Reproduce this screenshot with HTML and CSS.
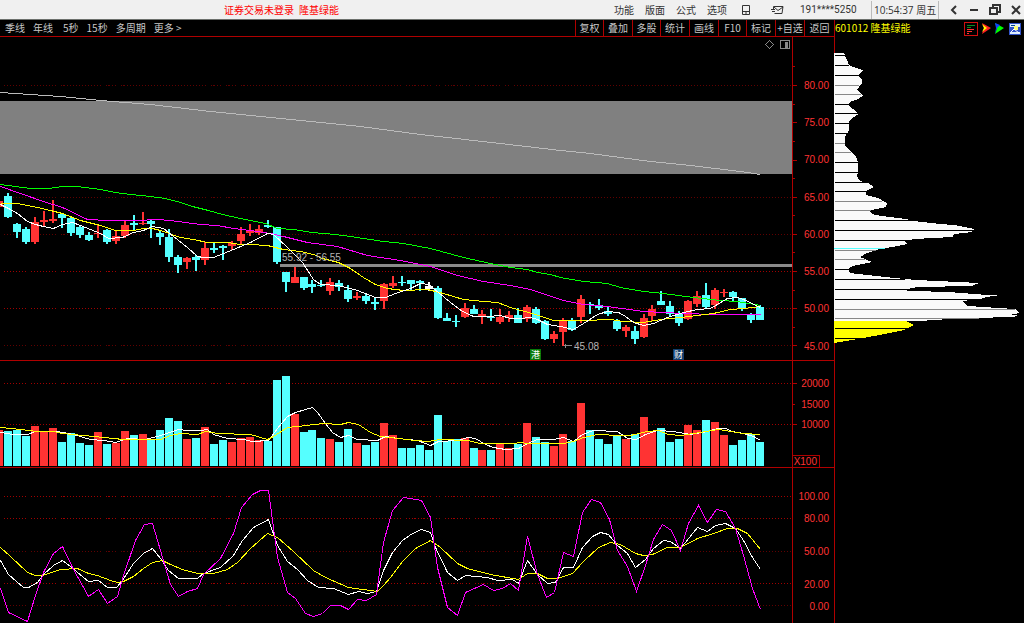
FILE: index.html
```html
<!DOCTYPE html>
<html lang="zh-CN">
<head>
<meta charset="utf-8">
<title>隆基绿能 601012</title>
<link rel="stylesheet" href="styles.css">
</head>
<body>
<div class="app">
<header class="titlebar">
  <h1 class="title">证券交易未登录&ensp;隆基绿能</h1>
  <nav class="menu">
    <button>功能</button><button>版面</button><button>公式</button><button>选项</button>
  </nav>
  <div class="tools">
    <button aria-label="手机"><svg width="10" height="12" viewBox="0 0 10 12"><path d="M1.5 1.5H8.5V10.5H1.5ZM1.5 7.5H8.5M4 9H6" class="ink"/></svg></button>
    <button aria-label="邮件"><svg width="14" height="12" viewBox="0 0 14 12"><path d="M2.5 5V2.5H12L11 9.5H3.5M3 3L7 6.5L12 3M0 5.5H4M1 7.5H4" class="ink"/></svg></button>
  </div>
  <span class="account">191****5250</span>
  <time class="clock">10:54:37 周五</time>
  <div class="window-buttons">
    <button aria-label="后退"><svg width="10" height="12" viewBox="0 0 10 12"><path d="M7 2L3 6L7 10" class="bold"/></svg></button>
    <button aria-label="最小化"><svg width="10" height="12" viewBox="0 0 10 12"><path d="M1 6H9" class="bold"/></svg></button>
    <button aria-label="还原"><svg width="12" height="12" viewBox="0 0 12 12"><path d="M1 4H8V10H1ZM4 4V1H11V8H8" class="bold"/></svg></button>
    <button aria-label="关闭"><svg width="10" height="12" viewBox="0 0 10 12"><path d="M1 2L9 10M9 2L1 10" class="bold"/></svg></button>
  </div>
</header>
<main class="workspace">
<section class="charts">
  <div class="toolbar">
    <nav class="periods">
      <button>季线</button><button>年线</button><button>5秒</button><button>15秒</button><button>多周期</button><button>更多 &gt;</button>
    </nav>
    <nav class="actions">
      <button>复权</button><button>叠加</button><button>多股</button><button>统计</button><button>画线</button><button>F10</button><button>标记</button><button>+自选</button><button>返回</button>
    </nav>
  </div>
  <div class="panels">
    <div class="panel">
      <svg class="plot" viewBox="0 37 792 323" preserveAspectRatio="none" role="img" aria-label="K线图">
        <rect x="0" y="101" width="792" height="73" fill="#808080"/>
        <g class="lines"><path class="grid" d="M3 85H792M3 197H792M3 234H792M3 345H792"/><path class="grid bright" d="M3 271H792M3 308H792"/></g>
        <rect x="280" y="264" width="512" height="3" fill="#8a8a8a"/>
        <g class="candles">
          <path class="down wick" d="M8 193V218M17 223V238M26 227V244M62 213V228M71 217V236M80 226V238M89 232V241M107 229V244M134 215V230M151 220V238M160 230V245M169 229V262M178 255V273M196 255V271M214 243V253M223 245V260M268 220V228M277 227V264M286 272V292M304 277V290M312 280V293M321 280V287M339 280V291M348 285V302M366 294V304M375 297V310M402 276V286M411 280V290M420 280V291M438 286V319M447 313V321M456 315V327M474 305V314M491 309V321M518 308V323M536 307V324M545 320V340M572 318V331M590 302V314M599 299V310M608 307V316M617 319V331M635 326V344M661 291V305M670 301V316M679 311V326M706 283V308M733 291V301M742 298V311M751 313V323M760 305V320"/>
          <path class="down" d="M8 196V217M17 224V232M26 229V242M62 214V218M71 218V233M80 227V235M89 235V240M107 230V242M134 223V225M151 221V224M160 233V237M169 237V257M178 257V265M196 257V260M214 248V250M223 246V248M268 225V227M277 227V262M286 272V282M304 277V288M312 284V287M321 285V286M339 283V287M348 290V299M366 296V301M375 302V304M402 282V283M411 280V284M420 281V283M438 288V318M447 318V321M456 321V322M474 309V314M491 317V318M518 315V323M536 309V323M545 321V339M572 320V330M590 304V305M599 305V308M608 311V314M617 321V329M635 331V339M661 301V305M670 306V314M679 314V323M706 295V307M733 292V297M742 298V309M751 315V320M760 307V320"/>
          <path class="up wick" d="M35 217V244M44 211V227M53 200V223M98 225V238M116 230V244M125 221V238M143 212V225M187 257V269M205 242V265M232 241V250M241 227V244M250 224V236M259 225V235M295 267V283M330 278V295M357 292V300M384 283V309M393 276V288M465 303V318M482 310V324M500 309V324M509 311V322M527 305V322M554 331V343M563 318V346M581 295V323M626 325V337M644 314V338M652 305V321M688 300V320M697 291V307M715 288V309M724 289V297"/>
          <path class="up" d="M-1 201V207M35 222V242M44 220V222M53 219V221M98 233V234M116 236V241M125 225V236M143 223V224M187 258V262M205 248V260M232 243V246M241 234V241M250 231V233M259 229V233M295 277V283M330 282V291M357 296V298M384 284V301M393 283V286M465 308V317M482 314V317M500 317V322M509 315V318M527 307V319M554 334V339M563 320V332M581 299V317M626 327V331M644 318V337M652 309V316M688 301V319M697 296V304M715 290V305M724 292V293"/>
          <path class="flat wick" d="M429 282V291"/><path class="flat" d="M429 286V289"/>
        </g>
        <g class="lines">
          <polyline class="long" points="0,92 60,96 100,100 150,104 210,111 290,119 360,126 420,134 500,143 560,150 590,153 650,161 690,165 740,171 760,174"/>
          <polyline class="green" points="0,184 30,188 48,188 62,186 76,186 100,189 115,192 130,194 150,196 165,198 180,202 192,206 208,210 222,214 240,218 265,223 277,228 293,229 312,232 335,234 350,236 383,241 403,243 430,248 463,257 490,263 510,267 527,269 537,272 550,274 560,277 583,281 607,283 620,287 643,291 663,293 693,297 720,300 737,301 760,305"/>
          <polyline class="magenta" points="0,186 20,193 43,201 62,207 87,219 107,220 137,220 157,219 170,220 200,224 217,225 233,228 250,230 270,233 283,236 307,242 337,246 367,255 400,260 430,266 457,275 483,281 510,285 530,289 563,300 583,304 607,306 643,311 683,313 713,314 760,314"/>
          <polyline class="yellow" points="0,203 17,203 37,207 50,210 62,213 80,220 100,225 115,230 133,230 143,228 152,228 160,230 180,237 193,239 207,242 227,242 240,244 250,244 267,245 283,249 300,251 313,254 322,258 338,262 350,268 363,277 375,284 387,288 403,290 427,289 443,293 463,299 483,301 497,302 510,307 535,314 553,320 583,320 610,319 623,321 643,322 660,319 680,317 697,315 713,313 730,309 743,308 760,306"/>
          <polyline class="white" points="0,204 8,208 17,213 27,221 35,224 43,226 53,228 62,224 72,222 80,225 90,229 100,233 108,238 122,237 133,232 143,230 152,226 163,228 173,236 187,247 197,256 203,257 213,257 223,253 233,249 250,242 267,233 273,234 287,247 302,262 313,279 320,284 338,285 357,290 375,297 385,297 395,293 410,288 420,283 428,284 438,292 450,302 462,311 473,316 487,316 500,315 510,318 520,318 530,317 537,319 547,324 560,326 573,329 583,323 597,314 607,311 618,312 625,316 633,322 643,325 653,323 667,317 683,312 697,309 710,308 727,298 737,297 743,299 760,307"/>
          <path class="mark" d="M563 345H571M565 343V347M769 40L773 44L769 48L765 44ZM780 40H789V48H780Z"/>
        </g>
        <rect x="785" y="42" width="3" height="6" fill="#888"/>
        <text class="note" x="282" y="261">55.92 - 56.55</text>
        <text class="note" x="574" y="350">45.08</text>
        <rect x="530" y="349" width="11" height="11" fill="#087a08"/><text class="tag" x="531" y="358">港</text>
        <rect x="673" y="349" width="11" height="11" fill="#123e6c"/><text class="tag" x="674" y="358">财</text>
      </svg>
      <svg class="scale" viewBox="793 37 41 323" preserveAspectRatio="none">
        <path class="tick" d="M793 85H797M793 122H797M793 160H797M793 197H797M793 234H797M793 271H797M793 308H797M793 345H797M793 66H795M793 104H795M793 141H795M793 178H795M793 215H795M793 252H795M793 290H795M793 327H795"/>
        <g class="figures"><text x="829" y="89">80.00</text><text x="829" y="126">75.00</text><text x="829" y="163">70.00</text><text x="829" y="201">65.00</text><text x="829" y="238">60.00</text><text x="829" y="275">55.00</text><text x="829" y="312">50.00</text><text x="829" y="350">45.00</text></g>
      </svg>
    </div>
    <div class="panel">
      <svg class="plot" viewBox="0 361 792 106" preserveAspectRatio="none" role="img" aria-label="成交量">
        <g class="lines"><path class="grid bright" d="M3 383H792M3 424H792"/></g>
        <g class="candles">
          <path class="down" d="M8 431V466M17 430V466M26 436V466M62 442V466M71 433V466M80 443V466M89 445V466M107 444V466M134 435V466M151 439V466M160 430V466M169 418V466M178 421V466M196 438V466M214 444V466M223 440V466M268 441V466M277 380V466M286 376V466M304 432V466M312 430V466M321 438V466M339 442V466M348 429V466M366 445V466M375 442V466M402 448V466M411 448V466M420 445V466M429 450V466M438 415V466M447 441V466M456 439V466M474 448V466M491 450V466M518 444V466M536 437V466M545 442V466M572 441V466M590 430V466M599 439V466M608 444V466M617 435V466M635 434V466M661 428V466M670 442V466M679 439V466M706 420V466M733 445V466M742 440V466M751 434V466M760 442V466"/>
          <path class="up" d="M-1 430V466M35 426V466M44 431V466M53 428V466M98 432V466M116 443V466M125 431V466M143 434V466M187 439V466M205 427V466M232 442V466M241 438V466M250 437V466M259 440V466M295 414V466M330 439V466M357 443V466M384 423V466M393 435V466M465 438V466M482 450V466M500 443V466M509 448V466M527 423V466M554 446V466M563 434V466M581 403V466M626 439V466M644 417V466M652 431V466M688 425V466M697 430V466M715 422V466M724 435V466"/>
        </g>
        <g class="lines">
          <polyline class="white" points="0,432 13,434 27,434 35,431 57,431 73,434 90,439 103,440 115,442 127,438 145,439 160,435 178,429 187,430 200,430 207,429 213,434 227,438 243,439 252,441 268,440 277,428 287,416 295,412 312,407 317,412 325,423 332,432 340,437 348,435 357,439 377,440 385,436 398,438 417,440 430,445 438,441 458,440 467,437 475,438 485,444 493,447 505,449 518,448 527,443 537,439 553,439 563,437 573,441 582,434 593,430 617,431 627,438 636,439 645,434 657,430 673,431 690,434 707,431 717,428 725,428 732,431 743,433 753,436 760,440"/>
          <polyline class="yellow" points="0,427 20,429 37,431 53,431 62,433 83,435 103,437 123,439 160,439 170,435 180,433 197,434 205,431 217,433 250,434 267,439 273,436 287,427 297,426 323,423 340,424 348,422 358,424 370,432 380,436 398,438 415,440 428,441 440,439 467,440 480,443 513,443 520,442 527,443 563,443 573,441 583,437 597,434 620,435 630,435 647,431 658,430 668,434 680,435 693,433 718,429 730,431 743,433 760,434"/>
        </g>
      </svg>
      <svg class="scale" viewBox="793 361 41 106" preserveAspectRatio="none">
        <path class="tick" d="M793 383H797M793 424H797M793 404H795M793 455H819V467"/>
        <g class="figures"><text x="829" y="387">20000</text><text x="829" y="408">15000</text><text x="829" y="428">10000</text><text x="817" y="465">X100</text></g>
      </svg>
    </div>
    <div class="panel">
      <svg class="plot" viewBox="0 468 792 155" preserveAspectRatio="none" role="img" aria-label="KDJ指标">
        <g class="lines"><path class="grid bright" d="M3 496H792M3 518H792M3 583H792"/><path class="grid" d="M3 551H792M3 605H792"/>
          <polyline class="white" points="0,560 8,574 23,587 28,587 37,582 43,574 53,565 62,560 70,566 88,581 98,580 107,587 116,587 122,580 133,563 143,553 152,548 160,558 168,570 178,578 197,578 203,573 220,567 233,555 242,540 253,527 268,519 277,545 287,561 297,569 307,580 318,587 333,588 348,594 358,591 367,593 376,591 383,570 392,552 402,540 412,533 421,529 430,532 435,547 447,572 457,580 465,575 487,577 497,580 512,579 518,583 527,560 537,574 547,583 555,582 563,567 573,567 582,547 592,536 600,532 608,534 617,545 627,553 635,567 645,559 653,548 663,540 670,541 680,548 697,527 707,531 715,525 725,523 735,528 743,540 752,557 760,569"/>
          <polyline class="yellow" points="0,547 10,556 27,572 35,575 42,575 60,569 77,568 88,573 97,575 110,580 117,582 123,581 133,576 143,568 152,562 162,560 170,564 182,569 197,573 213,573 227,569 237,562 250,548 267,533 277,537 293,551 313,570 325,577 348,587 377,591 383,585 390,577 402,561 415,548 430,540 440,547 457,563 467,568 490,574 518,579 527,573 537,573 547,578 557,578 572,573 583,561 598,547 610,542 620,544 635,553 643,555 652,554 667,547 680,547 697,538 713,533 727,528 737,528 747,533 760,549"/>
          <polyline class="magenta" points="0,588 8,612 27,621 35,595 43,572 53,553 62,546 72,567 88,596 98,589 107,603 117,596 123,575 135,540 144,524 152,523 160,550 170,584 178,596 187,591 197,588 203,574 220,558 233,533 241,507 252,494 260,490 268,490 277,557 287,592 295,598 305,613 313,616 322,613 330,605 340,605 348,609 357,599 366,600 376,594 383,542 392,510 403,497 421,500 430,517 437,567 447,607 457,615 465,592 483,584 493,590 502,588 510,583 518,590 527,536 537,574 546,597 554,592 563,552 573,556 582,512 591,499 600,502 609,519 617,550 627,566 636,591 645,565 653,539 662,524 671,530 680,550 688,523 698,505 707,522 716,509 725,511 735,528 743,555 752,588 760,609"/>
        </g>
      </svg>
      <svg class="scale" viewBox="793 468 41 155" preserveAspectRatio="none">
        <g class="figures"><text x="829" y="500">100.00</text><text x="829" y="522">80.00</text><text x="829" y="555">50.00</text><text x="829" y="588">20.00</text><text x="829" y="610">0.00</text></g>
      </svg>
    </div>
  </div>
</section>
<aside class="profile">
  <div class="symbol">
    <h2>601012 隆基绿能</h2>
    <div class="symbol-icons">
      <button aria-label="筹码分布"><svg width="14" height="14" viewBox="0 0 14 14" shape-rendering="crispEdges"><path d="M0 0H14V14H0Z" fill="#d01010"/><path d="M1 1H13V13H1Z" fill="#000"/><path d="M3 3H11V4H3ZM3 5H7V6H3Z" fill="#0a8a20"/><path d="M3 7H10V8H3ZM3 9H8V10H3ZM3 11H5V12H3Z" fill="#f33"/></svg></button>
      <button aria-label="火焰山"><svg width="10" height="14" viewBox="0 0 10 14"><path d="M1 1L10 6L1 12L3 6Z" fill="#f22"/><path d="M1 2L6 6L1 10L3 6Z" fill="#ff0"/></svg></button>
      <button aria-label="活跃度"><svg width="10" height="14" viewBox="0 0 10 14"><path d="M1 1L10 6L1 12L3 6Z" fill="#0f0"/><path d="M1 1L6 3L3 6L1 12L2 6Z" fill="#14f"/></svg></button>
      <button aria-label="设置"><svg width="12" height="14" viewBox="0 0 12 14"><path d="M0 1H12V13H0Z" fill="#35c"/><path d="M1 2H11V5H1ZM1 10H11V12H1Z" fill="#def"/><path d="M2 3H6V4H2Z" fill="#048"/><path d="M5 4H9V8H5Z" fill="#ff7"/><path d="M2 10L5 7L10 11" fill="none" stroke="#fff"/></svg></button>
    </div>
  </div>
  <svg class="plot" viewBox="834 37 190 586" preserveAspectRatio="none" role="img" aria-label="筹码分布图" shape-rendering="crispEdges">
    <rect x="834" y="37" width="1" height="586" fill="#b00000"/>
    <polygon fill="#fafafa" points="834,53 844,53 847,60 849,65 856,68 863,70 858,75 862,80 862,83 857,90 863,96 858,99 850,102 848,105 853,109 859,114 852,118 849,122 849,130 845,137 845,146 851,152 856,156 858,162 858,172 857,176 860,181 868,183 874,187 866,191 866,195 878,198 887,203 886,207 871,210 870,212 875,215 890,217 906,219 913,221 940,224 954,225 974,229 972,232 954,234 953,237 914,239 904,241 907,244 898,246 880,249 867,253 860,257 872,262 853,266 848,269 850,273 867,275 895,278 916,280 979,283 972,286 918,287 902,290 912,291 949,292 987,295 1000,295 986,297 980,299 962,301 968,306 1015,309 1019,313 1010,315 1023,316 1008,317 949,319 920,321 834,321"/>
    <polygon fill="#ff0" points="834,321 906,321 914,325 904,330 885,334 858,339 834,343"/>
    <path fill="#000" d="M835 55h11v1h-11zM835 65h14v1h-14zM835 75h24v1h-24zM835 104h14v1h-14zM835 113h24v1h-24zM835 123h14v1h-14zM835 133h14v1h-14zM835 162h24v1h-24zM835 172h24v1h-24zM835 182h34v1h-34zM835 191h34v1h-34zM835 220h80v1h-80zM835 230h140v1h-140zM835 240h80v1h-80zM835 269h14v1h-14zM835 279h70v1h-70zM835 289h80v1h-80zM835 299h150v1h-150zM835 328h80v1h-80zM835 338h40v1h-40z"/>
    <path fill="#888" d="M835 85h24v1h-24zM835 94h26v1h-26zM835 143h10v1h-10zM835 152h16v1h-16zM835 201h47v1h-47zM835 210h36v1h-36zM835 250h41v1h-41zM835 259h30v1h-30zM835 309h180v1h-180zM835 318h144v1h-144z"/>
    <rect x="834" y="248" width="51" height="1" fill="#5ff"/>
  </svg>
</aside>
</main>
</div>
</body>
</html>
```
FILE: styles.css
```css
* { box-sizing: border-box; }
body { margin: 0; background: #000; font: 10px/16px "Noto Sans CJK SC", sans-serif; }
.app { display: flex; flex-direction: column; height: 100vh; overflow: hidden; }
button { margin: 0; padding: 0; border: 0; background: none; color: inherit; font: inherit; white-space: nowrap; }
svg { display: block; }
h1, h2 { margin: 0; font-size: inherit; font-weight: normal; white-space: nowrap; }

.titlebar { flex: none; display: flex; align-items: center; height: 20px; padding-right: 3px; background: #f0f0f0; border-bottom: 1px solid #6c706c; color: #333; }
.title { margin-left: 224px; color: #f00; }
.menu { display: flex; gap: 11px; margin-left: auto; }
.tools { display: flex; gap: 20px; margin: 0 15px 0 14px; }
.account { width: 71px; font: 10px/16px Roboto, sans-serif; }
.clock { width: 68px; padding-left: 2px; border: solid #bbb; border-width: 0 1px; font: 10px/18px "Open Sans", "Noto Sans CJK SC", sans-serif; white-space: nowrap; }
.window-buttons { display: flex; gap: 10px; margin-left: 10px; }
.ink { fill: none; stroke: #333; stroke-width: 1; }
.bold { fill: none; stroke: #333; stroke-width: 2; }

.workspace { flex: 1; min-height: 0; display: grid; grid-template-columns: minmax(0, 834fr) minmax(0, 190fr); }
.charts, .profile { display: flex; flex-direction: column; min-height: 0; }
.toolbar { flex: none; display: flex; justify-content: space-between; height: 17px; border-bottom: 1px solid #b00000; color: #c8c8c8; }
.periods { display: flex; gap: 8px; padding-left: 5px; }
.periods button:nth-child(3) { padding-left: 2px; }
.actions { display: flex; }
.actions button { width: 29px; border-left: 1px solid #b00000; text-align: center; }
.actions button:nth-child(1), .actions button:nth-child(3), .actions button:nth-child(6) { width: 28px; }
.actions button:last-child { width: 30px; }

.panels { flex: 1; min-height: 0; display: grid; grid-template-rows: minmax(0, 324fr) minmax(0, 107fr) minmax(0, 155fr); }
.panel { display: flex; min-height: 0; border-bottom: 1px solid #b00000; }
.panel:last-child { border-bottom: 0; }
.plot { flex: 1; min-width: 0; min-height: 0; height: 100%; }
.scale { flex: none; width: 42px; height: 100%; border-left: 1px solid #b00000; }

.lines { fill: none; stroke-width: 1; transform: translate(0.5px, 0.5px); shape-rendering: crispEdges; }
.grid { stroke: #600000; stroke-dasharray: 1 2; }
.bright { stroke: #a00000; }
.candles { stroke-width: 8; shape-rendering: crispEdges; }
.wick { stroke-width: 2; }
.down { stroke: #5ff; }
.up { stroke: #f33; }
.flat { stroke: #fff; }
.long { stroke: #bbb; }
.green { stroke: #0f0; }
.magenta { stroke: #f0f; }
.yellow { stroke: #ff0; }
.white { stroke: #fff; }
.mark { stroke: #888; }
.note { fill: #b4b4b4; font: 10px "Liberation Sans", sans-serif; }
.tag { fill: #fff; font-size: 9px; }
.tick { fill: none; stroke: #b00000; shape-rendering: crispEdges; }
.figures { fill: #f33; font: 10px "Liberation Sans", sans-serif; text-anchor: end; }

.symbol { flex: none; display: flex; justify-content: space-between; height: 17px; padding-right: 3px; border-left: 1px solid #b00000; color: #ff0; }
.symbol-icons { display: flex; align-items: center; }
.symbol-icons button:nth-child(2) { margin: 0 3px; }
.symbol-icons button:nth-child(3) { margin-right: 5px; }
```
